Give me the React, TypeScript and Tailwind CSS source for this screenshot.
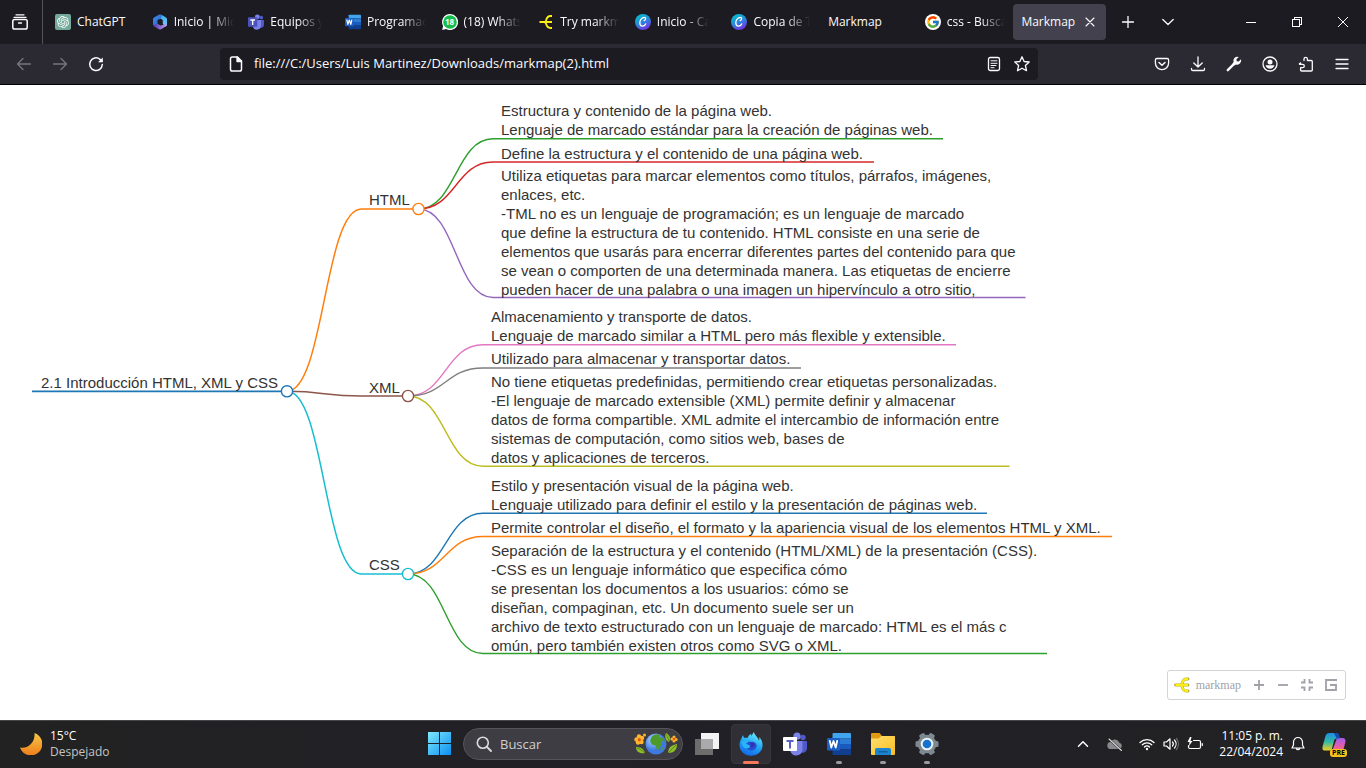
import React from "react";
import { SiOpenai } from "react-icons/si";
import { FcGoogle } from "react-icons/fc";

type P = { children?: React.ReactNode; className?: string; box?: string };

function Svg({ children, className = "size-4", box = "0 0 16 16" }: P) {
  return (
    <svg viewBox={box} className={`shrink-0 ${className}`} fill="none" stroke="currentColor" strokeWidth="1.3" strokeLinecap="round" strokeLinejoin="round" aria-hidden="true">
      {children}
    </svg>
  );
}

/* ---------- favicons ---------- */

const ChatGptIcon = () => (
  <span className="flex size-4 shrink-0 items-center justify-center rounded-xs bg-[#74aa9c] text-white">
    <SiOpenai className="size-3" />
  </span>
);

const M365Icon = () => (
  <Svg>
    <defs>
      <linearGradient id="m1" x1="0" y1="0" x2="1" y2="1"><stop offset="0" stopColor="#3d8fe8" /><stop offset="1" stopColor="#2a5fd0" /></linearGradient>
      <linearGradient id="m2" x1="0" y1="0" x2="0" y2="1"><stop offset="0" stopColor="#3bb4f2" /><stop offset="1" stopColor="#7cc4f8" /></linearGradient>
      <linearGradient id="m3" x1="0" y1="0" x2="1" y2="0"><stop offset="0" stopColor="#4a3ba8" /><stop offset="1" stopColor="#c79af5" /></linearGradient>
    </defs>
    <path stroke="none" fill="url(#m2)" d="M9.500.8 14 3.400c.6.4 1 1 1 1.700v5.400c0 1-.7 1.700-1.500 2.200L10.800 10V6L7.500 4z" />
    <path stroke="none" fill="url(#m1)" d="M7 .7c.7-.4 1.500-.3 2.200 0L10 1.300 9 4.500 5.500 6v4L3.200 12.300C2 12 1 11.500 1 10.300V5.200c0-.7.4-1.300 1-1.700z" />
    <path stroke="none" fill="url(#m3)" d="M1.300 11 5.500 9.800 8.500 11.500l6.300-1.500c0 1.200-.4 1.900-1 2.300L9.200 15.200c-.8.4-1.600.4-2.300 0L2.200 12.500c-.5-.3-.9-.8-.9-1.500z" />
  </Svg>
);

function TeamsIcon({ className = "size-4", light = false }: { className?: string; light?: boolean }) {
  return (
    <Svg className={className} box="0 0 24 24">
      <g stroke="none">
        <circle cx="20" cy="5.500" r="2.700" fill="#5059c9" />
        <circle cx="14" cy="4.200" r="3.600" fill="#7b83eb" />
        <path fill="#5059c9" d="M17 9h6.200c.5 0 .8.3.8.8v6.700a4.500 4.500 0 0 1-7 3.500z" />
        <path fill="#7b83eb" d="M8.500 9h10.200c.5 0 .8.4.8.8v7.200a6.300 6.300 0 0 1-12 2.800z" />
        <rect x="0" y="5" width="14" height="14" rx="1" fill={light ? "#fff" : "#4b53bc"} />
        <path fill={light ? "#5b5fc7" : "#fff"} d="M3.500 8h7v2H8v6.500H6V10H3.500z" />
      </g>
    </Svg>
  );
}

function WordIcon({ className = "size-4" }: { className?: string }) {
  return (
    <Svg className={className} box="0 0 24 24">
      <g stroke="none">
        <path fill="#41a5ee" d="M6.500 1H23a1 1 0 0 1 1 1v4.500H5.500V2a1 1 0 0 1 1-1z" />
        <path fill="#2b7cd3" d="M5.500 6.500H24V12H5.500z" />
        <path fill="#185abd" d="M5.500 12H24v5.500H5.500z" />
        <path fill="#103f91" d="M5.500 17.500H24V22a1 1 0 0 1-1 1H6.500a1 1 0 0 1-1-1z" />
        <rect x="0" y="6" width="13" height="12.500" rx="1" fill="#1c5fc4" />
      </g>
      <path stroke="#fff" strokeWidth="1.800" d="m2.800 9 1.500 6.500L6.500 9l2.200 6.500L10.200 9" />
    </Svg>
  );
}

const WhatsAppIcon = () => (
  <span className="relative flex size-4 shrink-0 items-center justify-center text-[8px] font-bold text-white">
    <svg viewBox="0 0 16 16" className="absolute inset-0" aria-hidden="true">
      <path fill="#fff" d="M8 0a8 8 0 1 1-3.800 15L.2 16l.9-4A8 8 0 0 1 8 0z" />
      <circle cx="8" cy="8" r="6.800" fill="#12bf4c" />
    </svg>
    <span className="relative">18</span>
  </span>
);

function MarkmapIcon({ className = "size-4", outline = false }: { className?: string; outline?: boolean }) {
  const d = "M1.500 8h12.500M14 2h-1.500C9.500 2 8.500 4.500 8 6.500 7.600 7.600 7 8 6 8c1 0 1.600.4 2 1.500.5 2 1.500 4.500 4.500 4.500H14";
  return (
    <Svg className={className}>
      {outline && <path stroke="#b5ab2a" strokeWidth="2.800" d={d} />}
      <path stroke="#fdee14" strokeWidth="1.800" strokeLinecap="butt" d={d} />
    </Svg>
  );
}

const CanvaIcon = () => (
  <Svg>
    <defs>
      <linearGradient id="cv" x1=".2" y1="0" x2=".7" y2="1"><stop offset="0" stopColor="#00c4cc" /><stop offset=".5" stopColor="#2a88dd" /><stop offset="1" stopColor="#7d2ae8" /></linearGradient>
    </defs>
    <circle cx="8" cy="8" r="8" fill="url(#cv)" stroke="none" />
    <path stroke="#fff" strokeWidth="1.300" d="M9.300 6.500c1.500-.3 1.900-3.200 0-3.200-2.500 0-4.500 2.900-4.500 5.500 0 2 1.100 3.300 2.600 3.300 1.500 0 2.800-1 3.300-2.200" />
  </Svg>
);

const GoogleIcon = () => (
  <span className="flex size-4 shrink-0 items-center justify-center rounded-full bg-white"><FcGoogle className="size-[14px]" /></span>
);

/* ---------- browser ---------- */

const tabs: { title: string; icon?: React.ReactNode; fade?: boolean }[] = [
  { title: "ChatGPT", icon: <ChatGptIcon /> },
  { title: "Inicio | Mic", icon: <M365Icon />, fade: true },
  { title: "Equipos y", icon: <TeamsIcon />, fade: true },
  { title: "Programac", icon: <WordIcon />, fade: true },
  { title: "(18) Whats", icon: <WhatsAppIcon />, fade: true },
  { title: "Try markm", icon: <MarkmapIcon />, fade: true },
  { title: "Inicio - Ca", icon: <CanvaIcon />, fade: true },
  { title: "Copia de T", icon: <CanvaIcon />, fade: true },
  { title: "Markmap" },
  { title: "css - Busca", icon: <GoogleIcon />, fade: true },
];

function TabBar() {
  return (
    <header className="flex h-11 items-stretch bg-[#1c1b22] text-[12px] text-[#fbfbfe]">
      <button aria-label="Ver pestañas" className="flex w-[43px] shrink-0 items-center justify-center border-r border-[#54535c] pr-0.5">
        <Svg className="size-4">
          <path d="M2 3.300h12M4 .8h8" />
          <rect x=".8" y="5.500" width="14.400" height="9.500" rx="1.800" strokeWidth="1.500" />
          <path d="M6.500 9h3" />
        </Svg>
      </button>
      <div className="flex min-w-0 flex-1 items-center pl-0.5">
        {tabs.map((t, i) => (
          <div key={i} className="min-w-0 flex-1 px-0.5">
            <button className="flex h-9 w-full items-center gap-1.5 pl-2 text-left">
              {t.icon}
              <span className={t.fade ? "whitespace-nowrap [mask-image:linear-gradient(to_left,transparent_2px,black_26px)]" : "whitespace-nowrap"}>{t.title}</span>
            </button>
          </div>
        ))}
        <div className="min-w-0 flex-1 px-0.5">
          <div className="flex h-9 items-center justify-between rounded bg-[#42414d] pr-2 pl-2">
            <span>Markmap</span>
            <button aria-label="Cerrar pestaña" className="flex size-4 items-center justify-center">
              <Svg className="size-2.5" box="0 0 10 10"><path d="m1 1 8 8M9 1 1 9" strokeWidth="1.100" /></Svg>
            </button>
          </div>
        </div>
      </div>
      <button aria-label="Nueva pestaña" className="flex w-10 items-center justify-center">
        <Svg className="size-3" box="0 0 12 12"><path d="M6 .5v11M.5 6h11" /></Svg>
      </button>
      <button aria-label="Listar pestañas" className="mr-10 flex w-10 items-center justify-center">
        <Svg className="size-3" box="0 0 12 12"><path d="m.8 3.500 5.200 5 5.200-5" /></Svg>
      </button>
      <button aria-label="Minimizar" className="flex w-[46px] items-center justify-center"><span className="h-px w-2.5 bg-white" /></button>
      <button aria-label="Restaurar" className="flex w-[46px] items-center justify-center">
        <svg viewBox="0 0 10 10" className="size-2.5" fill="none" stroke="#fff" shapeRendering="crispEdges" aria-hidden="true"><path d="M.5 2.500h7v7h-7zM2.500 2.500v-2h7v7h-2" /></svg>
      </button>
      <button aria-label="Cerrar" className="flex w-[46px] items-center justify-center">
        <Svg className="size-2.5" box="0 0 10 10"><path d="m0 0 10 10M10 0 0 10" strokeWidth="1" /></Svg>
      </button>
    </header>
  );
}

function NavButton({ label, children, dim }: { label: string; children: React.ReactNode; dim?: boolean }) {
  return (
    <button aria-label={label} className={dim ? "flex h-8 w-9 items-center justify-center text-[#77767e]" : "flex h-8 w-9 items-center justify-center text-[#fbfbfe]"}>
      <Svg>{children}</Svg>
    </button>
  );
}

function NavBar() {
  return (
    <nav className="flex h-[41px] items-center border-b border-black bg-[#2b2a33] px-1.5 text-[#fbfbfe]">
      <NavButton label="Atrás" dim><path d="M14.500 8H1.500M7 2.500 1.500 8 7 13.500" /></NavButton>
      <NavButton label="Adelante" dim><path d="M1.500 8h13M9 2.500 14.500 8 9 13.500" /></NavButton>
      <NavButton label="Recargar">
        <path d="M14.300 8.500A6.300 6.300 0 1 1 12 3.300L14 5" strokeWidth="1.500" />
        <path d="M14.800 1.500v4.800H10z" fill="currentColor" stroke="none" />
      </NavButton>
      <div className="mx-[106px] flex h-8 min-w-0 flex-1 items-center rounded bg-[#1c1b22] pr-2 pl-2">
        <Svg>
          <path d="M9.500 1H4.300C3.300 1 2.500 1.800 2.500 2.800v10.400c0 1 .8 1.800 1.800 1.800h7.400c1 0 1.800-.8 1.800-1.800V5z" strokeWidth="1.500" />
          <path d="M9 1v4.500h4.500z" fill="currentColor" />
        </Svg>
        <input aria-label="Dirección" defaultValue="file:///C:/Users/Luis Martinez/Downloads/markmap(2).html" className="ml-2.5 min-w-0 flex-1 bg-transparent text-[13px] outline-none" />
        <button aria-label="Vista de lectura" className="mr-3">
          <Svg><rect x="2.500" y="1.500" width="11" height="13" rx="1.800" /><path d="M5 4.800h6M5 7.300h6M5 9.500h5M5 11.700h3" strokeWidth="1" /></Svg>
        </button>
        <button aria-label="Añadir a marcadores">
          <Svg><path d="m8 .8 2.100 4.700 5.100.5-3.800 3.500 1.100 5.200L8 12.200l-4.500 2.500 1.100-5.200L.8 6l5.100-.5z" /></Svg>
        </button>
      </div>
      <NavButton label="Pocket"><path d="M2.800 2.500h10.400c.8 0 1.400.6 1.400 1.400V7a6.600 6.600 0 0 1-13.200 0V3.900c0-.8.600-1.400 1.400-1.400z" /><path d="M5 6.500 8 9.300l3-2.800" strokeWidth="1.500" /></NavButton>
      <NavButton label="Descargas"><path d="M8 1v10M3.800 7 8 11l4.200-4M1.500 12.500v.7c0 .8.500 1.300 1.300 1.300h10.400c.8 0 1.300-.500 1.300-1.300v-.7" /></NavButton>
      <NavButton label="Herramientas">
        <path d="m1.800 14.200 6.500-6.500" strokeWidth="2.400" />
        <path stroke="none" fill="currentColor" d="M12.800 1a4 4 0 0 0-5.200 5L6.500 7.500l2 2L10 8.400a4 4 0 0 0 5-5.200l-2.300 2.300-2-.3-.3-2z" />
      </NavButton>
      <NavButton label="Cuenta">
        <circle cx="8" cy="8" r="7" /><circle cx="8" cy="6" r="2.500" fill="currentColor" stroke="none" />
        <path d="M3.500 9.300h9a4.700 4.700 0 0 1-9 0z" fill="currentColor" stroke="none" />
      </NavButton>
      <NavButton label="Extensiones"><path d="M6 4.500V3a1.700 1.700 0 0 1 3.400 0v1.500h3.800c.7 0 1.100.4 1.100 1.100V14c0 .6-.4 1-1.100 1H3.700c-.7 0-1.100-.4-1.100-1v-2.300h2a1.700 1.700 0 0 0 0-3.400H1.500v-1M2.600 8.300V7" /></NavButton>
      <NavButton label="Menú"><path d="M2 3.500h12M2 8h12M2 12.500h12" /></NavButton>
    </nav>
  );
}

/* ---------- mind map ---------- */

const nodes: { at: string; lines: string[] }[] = [
  { at: "left-[41px] top-[288px]", lines: ["2.1 Introducción HTML, XML y CSS"] },
  { at: "left-[369px] top-[105px]", lines: ["HTML"] },
  { at: "left-[369px] top-[293px]", lines: ["XML"] },
  { at: "left-[369px] top-[470px]", lines: ["CSS"] },
  { at: "left-[501px] top-[16px]", lines: ["Estructura y contenido de la página web.", "Lenguaje de marcado estándar para la creación de páginas web."] },
  { at: "left-[501px] top-[59px]", lines: ["Define la estructura y el contenido de una página web."] },
  {
    at: "left-[501px] top-[81px]",
    lines: [
      "Utiliza etiquetas para marcar elementos como títulos, párrafos, imágenes,",
      "enlaces, etc.",
      "-TML no es un lenguaje de programación; es un lenguaje de marcado",
      "que define la estructura de tu contenido. HTML consiste en una serie de",
      "elementos que usarás para encerrar diferentes partes del contenido para que",
      "se vean o comporten de una determinada manera. Las etiquetas de encierre",
      "pueden hacer de una palabra o una imagen un hipervínculo a otro sitio,",
    ],
  },
  { at: "left-[491px] top-[222px]", lines: ["Almacenamiento y transporte de datos.", "Lenguaje de marcado similar a HTML pero más flexible y extensible."] },
  { at: "left-[491px] top-[264px]", lines: ["Utilizado para almacenar y transportar datos."] },
  {
    at: "left-[491px] top-[287px]",
    lines: [
      "No tiene etiquetas predefinidas, permitiendo crear etiquetas personalizadas.",
      "-El lenguaje de marcado extensible (XML) permite definir y almacenar",
      "datos de forma compartible. XML admite el intercambio de información entre",
      "sistemas de computación, como sitios web, bases de",
      "datos y aplicaciones de terceros.",
    ],
  },
  { at: "left-[491px] top-[391px]", lines: ["Estilo y presentación visual de la página web.", "Lenguaje utilizado para definir el estilo y la presentación de páginas web."] },
  { at: "left-[491px] top-[433px]", lines: ["Permite controlar el diseño, el formato y la apariencia visual de los elementos HTML y XML."] },
  {
    at: "left-[491px] top-[456px]",
    lines: [
      "Separación de la estructura y el contenido (HTML/XML) de la presentación (CSS).",
      "-CSS es un lenguaje informático que especifica cómo",
      "se presentan los documentos a los usuarios: cómo se",
      "diseñan, compaginan, etc. Un documento suele ser un",
      "archivo de texto estructurado con un lenguaje de marcado: HTML es el más c",
      "omún, pero también existen otros como SVG o XML.",
    ],
  },
];

// from x, from y, bend end x, line y, line end x, colour, width
const links: [number, number, number, number, number, string, number][] = [
  [418.5, 124, 493, 53.7, 943, "#2ca02c", 1.4],
  [418.5, 124, 493, 77, 874, "#d62728", 1.4],
  [418.5, 124, 493, 212.5, 1025.500, "#9467bd", 1.4],
  [408, 311, 483, 259.700, 956, "#e377c2", 1.4],
  [408, 311, 483, 283, 801, "#7f7f7f", 1.4],
  [408, 311, 483, 381.200, 1009.500, "#bcbd22", 1.4],
  [408, 489, 483, 428.300, 987, "#1f77b4", 1.4],
  [408, 489, 483, 451.500, 1112, "#ff7f0e", 1.4],
  [408, 489, 483, 568.500, 1047, "#2ca02c", 1.4],
  [287, 306.300, 361.500, 124, 418, "#ff7f0e", 1.5],
  [287, 306.300, 361.500, 311, 408, "#8c564b", 1.5],
  [287, 306.300, 361.500, 489, 408, "#17becf", 1.5],
];

const dots: [number, number, string][] = [
  [287, 306.300, "#1f77b4"],
  [418.500, 124, "#ff7f0e"],
  [408, 311, "#8c564b"],
  [408, 489, "#17becf"],
];

function MindMap() {
  return (
    <main className="relative min-h-[600px] flex-1 overflow-hidden bg-white font-['Liberation_Sans',sans-serif] text-[15px] leading-[19px] text-[#333]">
      <svg className="absolute inset-0 size-full" fill="none" aria-hidden="true">
        <path d="M32 306.300H287" stroke="#1f77b4" strokeWidth="1.800" />
        {links.map(([x0, y0, x1, y1, x2, c, w], i) => {
          const m = (x0 + x1) / 2;
          return <path key={i} d={`M${x0} ${y0}C${m} ${y0} ${m} ${y1} ${x1} ${y1}H${x2}`} stroke={c} strokeWidth={w} />;
        })}
        {dots.map(([x, y, c], i) => <circle key={i} cx={x} cy={y} r="5.600" fill="#fff" stroke={c} strokeWidth="1.400" />)}
      </svg>
      {nodes.map((n, i) => (
        <div key={i} className={`absolute whitespace-nowrap ${n.at}`}>
          {n.lines.map((l, j) => <div key={j}>{l}</div>)}
        </div>
      ))}
      <div className="absolute right-5 bottom-5 flex h-[30px] items-center rounded-[3px] border border-[#d4d4d8] bg-white pr-1.5 pl-1 text-[#a1a1aa]">
        <a href="#markmap" className="flex items-center gap-1 font-['Liberation_Serif',serif] text-[12px] leading-4">
          <MarkmapIcon className="h-4 w-5" outline />
          markmap
        </a>
        <button aria-label="Acercar" className="ml-2.5 flex size-4 items-center justify-center"><Svg className="size-3" box="0 0 12 12"><path d="M6 1v10M1 6h10" strokeWidth="1.800" strokeLinecap="butt" /></Svg></button>
        <button aria-label="Alejar" className="ml-2 flex size-4 items-center justify-center"><Svg className="size-3" box="0 0 12 12"><path d="M1 6h10" strokeWidth="1.800" strokeLinecap="butt" /></Svg></button>
        <button aria-label="Ajustar" className="ml-2 flex size-4 items-center justify-center"><Svg className="size-3" box="0 0 12 12"><path d="M0 3.500h3.500V0M8.500 0v3.500H12M12 8.500H8.500V12M3.500 12V8.500H0" strokeWidth="1.800" strokeLinecap="butt" strokeLinejoin="miter" /></Svg></button>
        <button aria-label="Expandir nodos" className="ml-2 flex size-4 items-center justify-center"><Svg className="size-3" box="0 0 12 12"><path d="M12 1H1v10h10V6H5" strokeWidth="1.800" strokeLinecap="butt" strokeLinejoin="miter" /></Svg></button>
      </div>
    </main>
  );
}

/* ---------- taskbar ---------- */

function TaskButton({ label, children, active, running }: { label: string; children: React.ReactNode; active?: boolean; running?: boolean }) {
  return (
    <button aria-label={label} className={active ? "relative flex size-10 items-center justify-center rounded border border-[#37363d] bg-[#302f36]" : "relative flex size-10 items-center justify-center"}>
      {children}
      {active && <span className="absolute -bottom-px left-[11px] h-[3px] w-4 rounded-full bg-[#f5775c]" />}
      {running && <span className="absolute bottom-0 left-[17px] h-[3px] w-1.5 rounded-full bg-[#9a999e]" />}
    </button>
  );
}

const EarthArt = () => (
  <svg viewBox="0 0 44 22" className="h-[22px] w-11" aria-hidden="true">
    <defs>
      <radialGradient id="ea" cx=".35" cy=".3"><stop offset="0" stopColor="#a9d6fc" /><stop offset="1" stopColor="#3f78e0" /></radialGradient>
    </defs>
    <path fill="#8dbb2a" d="M2 14c5 0 8 2 9 6-5 1-9-1-9-6zM32 0c4 2 5 5 3 9-3-1-5-5-3-9zM43 11c0 6-3 9-9 9 0-5 3-8 9-9z" />
    <path stroke="#4d7a16" strokeWidth=".7" fill="none" d="M3 15c3 1 6 3 8 5M34 20l8-8M32.500 1.500 35 8" />
    <circle cx="22" cy="11" r="10.500" fill="url(#ea)" />
    <path fill="#4d9a2a" d="M18 3.500c2-2 6-2.500 8-1.500l-1 2 4 1 2 4-3-1-.5 3.500-3 5-1.500 1-1.200-5-4-1-1.500-3c0-2 .7-4 1.700-5zM28 14l1.500 1-2 3-1-1z" />
    <g fill="#ffb52e"><circle cx="5" cy="3.500" r="2.200" /><circle cx="2.500" cy="6.500" r="2.200" /><circle cx="4" cy="9.500" r="2.200" /><circle cx="7.500" cy="9" r="2.200" /><circle cx="8" cy="5" r="2.200" /><circle cx="10.500" cy="2" r="1.500" /><circle cx="40" cy="4" r="1.600" /><circle cx="38" cy="6" r="1.600" /><circle cx="42" cy="6.500" r="1.600" /><circle cx="40" cy="8" r="1.600" /></g>
    <circle cx="5.300" cy="6.800" r="1.600" fill="#e8590c" /><circle cx="40" cy="6" r="1.200" fill="#e8590c" />
  </svg>
);

function Taskbar() {
  return (
    <footer className="grid h-12 grid-cols-[1fr_auto_1fr] items-center border-t border-[#46464a] bg-linear-to-r from-[#222222] via-[#212027] to-[#222223] pb-0.5 text-[12px] leading-4 text-white">
      <button className="flex items-center gap-2 pl-5 text-left">
        <svg viewBox="0 0 22 22" className="size-[22px]" aria-hidden="true">
          <defs><linearGradient id="mo" x1="0" y1="0" x2="0" y2="1"><stop offset="0" stopColor="#f6c945" /><stop offset="1" stopColor="#f07d1c" /></linearGradient></defs>
          <path fill="url(#mo)" d="M14.500 0A11.500 11.500 0 1 1 0 14.500C8 16.500 15.500 9 14.500 0z" />
        </svg>
        <span><span className="block">15°C</span><span className="block text-[#c4c4c6]">Despejado</span></span>
      </button>
      <div className="flex items-center gap-1">
        <TaskButton label="Inicio">
          <svg viewBox="0 0 23 23" className="size-[23px]" aria-hidden="true">
            <defs><linearGradient id="wi" x1="0" y1="0" x2="23" y2="23" gradientUnits="userSpaceOnUse"><stop offset="0" stopColor="#7fe9ff" /><stop offset="1" stopColor="#0a8ff0" /></linearGradient></defs>
            <path fill="url(#wi)" d="M0 0h11v11H0zM12 0h11v11H12zM0 12h11v11H0zM12 12h11v11H12z" />
          </svg>
        </TaskButton>
        <label className="flex h-8 w-[220px] items-center rounded-full border border-[#55545a] bg-[#3e3d43] pr-1 pl-3">
          <Svg className="size-4"><circle cx="6.800" cy="6.800" r="5.500" strokeWidth="1.600" stroke="#ddd" /><path d="m11 11 4 4" strokeWidth="1.800" stroke="#ddd" /></Svg>
          <input aria-label="Buscar" placeholder="Buscar" className="ml-2 min-w-0 flex-1 bg-transparent text-[13px] outline-none placeholder:text-[#cfcfd2]" />
          <EarthArt />
        </label>
        <TaskButton label="Vista de tareas">
          <svg viewBox="0 0 24 22" className="h-[22px] w-6" aria-hidden="true"><path fill="#f3f3f3" d="M6 0h18v16H6z" /><path fill="#6d6d6e" d="M0 6h18v16H0z" /><path fill="#aaa9ab" d="M6 6h12v10H6z" /></svg>
        </TaskButton>
        <TaskButton label="Firefox" active>
          <svg viewBox="0 0 24 24" className="size-6" aria-hidden="true">
            <defs>
              <linearGradient id="ff" x1=".7" y1="0" x2=".3" y2="1"><stop offset="0" stopColor="#6ff0f7" /><stop offset=".5" stopColor="#1fa7f5" /><stop offset="1" stopColor="#1463e8" /></linearGradient>
            </defs>
            <path fill="url(#ff)" d="M4 3c.2 1.400.8 2.200 1.700 3 1-.3 2-.3 2.800 0C9.500 4 10.700 2.500 12.300 1.800l-.1 2.400L14.800 0c.6 3 4 4.800 5.200 8.700.4-.8.400-2.400.2-3.700 2.400 2.500 3.600 5.500 3.300 9A11.500 10.300 0 0 1 .5 13C.5 9 2.300 7 4 3z" />
            <path fill="#2450d4" d="M6.500 13c0-2 2.500-2.500 3-3.500 1.500.8 3 0 4.500.3 3 .6 4 3 3.500 5-.6 2.600-3 4-5.800 3.700C8.500 18.200 6.500 16 6.500 13z" />
            <path fill="#2cb4f7" d="M2.500 10.500C4 8 7 8 9.500 9.500c-.5 1-2 1-2.500 2 1 1.500 3.500 1 4.500 3-2 3-6.500 2.500-8-1z" />
            <path fill="#3a2fa8" d="M11 11c3-1.500 5 .5 4.500 2.500S12 16 10.500 14.500c2-.5 2.500-1.500.5-3.500z" />
          </svg>
        </TaskButton>
        <TaskButton label="Teams"><TeamsIcon className="size-6" light /></TaskButton>
        <TaskButton label="Word" running><WordIcon className="size-6" /></TaskButton>
        <TaskButton label="Explorador de archivos" running>
          <svg viewBox="0 0 24 22" className="h-[22px] w-6" aria-hidden="true">
            <defs><linearGradient id="fo" x1="0" y1="0" x2="1" y2="1"><stop offset="0" stopColor="#ffdf6e" /><stop offset="1" stopColor="#f9bd23" /></linearGradient></defs>
            <path fill="#e09b10" d="M1 0h7.500L11 3H23a1 1 0 0 1 1 1v6H0V1a1 1 0 0 1 1-1z" />
            <path fill="url(#fo)" d="M0 5.500h7.500L10.500 3H23a1 1 0 0 1 1 1v17a1 1 0 0 1-1 1H1a1 1 0 0 1-1-1z" />
            <path fill="#1b86cf" d="M4 22v-5c0-1.200.8-2 2-2h12c1.200 0 2 .8 2 2v5z" /><path fill="#0f5fa3" d="M7.500 18h9v1.500h-9z" />
          </svg>
        </TaskButton>
        <TaskButton label="Configuración" running>
          <svg viewBox="0 0 24 24" className="size-6" aria-hidden="true">
            <g fill="#7d8991">
              <circle cx="12" cy="12" r="9.300" />
              <rect x="9" y=".5" width="6" height="23" rx="1.500" transform="rotate(30 12 12)" />
              <rect x="9" y=".5" width="6" height="23" rx="1.500" transform="rotate(90 12 12)" />
              <rect x="9" y=".5" width="6" height="23" rx="1.500" transform="rotate(150 12 12)" />
            </g>
            <circle cx="12" cy="12" r="6.300" fill="#eef2f5" /><circle cx="12" cy="12" r="4.300" fill="#1573cf" />
          </svg>
        </TaskButton>
      </div>
      <div className="flex items-center justify-end pr-5">
        <button aria-label="Iconos ocultos" className="flex w-8 justify-center"><Svg className="size-3" box="0 0 12 12"><path d="m1.500 8.300 4.500-4.500 4.500 4.500" strokeWidth="1.500" /></Svg></button>
        <button aria-label="OneDrive" className="flex w-8 justify-center">
          <Svg><path stroke="none" fill="#8a8a8c" d="M4 13a3.500 3.500 0 0 1-.3-7 4.700 4.700 0 0 1 8.600.8A3.200 3.200 0 0 1 12.500 13z" /><path d="m2.500 3.500 12 11" stroke="#222" strokeWidth="2.200" /><path d="m2 3 12.500 11.500" stroke="#ddd" strokeWidth="1.100" /></Svg>
        </button>
        <button aria-label="Red, volumen y batería" className="ml-2 flex items-center gap-2">
          <Svg><path d="M1 6.500a10 10 0 0 1 14 0M3.300 8.800a6.700 6.700 0 0 1 9.400 0M5.500 11a3.500 3.500 0 0 1 5 0" /><circle cx="8" cy="13" r="1.200" fill="currentColor" stroke="none" /></Svg>
          <Svg><path d="M1 6h2.500L7 2.800v10.400L3.500 10H1zM9.500 6a3 3 0 0 1 0 4M11.500 4a6 6 0 0 1 0 8" strokeWidth="1.200" /><path d="M13.500 2.500a9 9 0 0 1 0 11" stroke="#666" /></Svg>
          <Svg className="size-4"><path d="M6.500 4.500H12c.8 0 1.500.7 1.500 1.500v5c0 .8-.7 1.500-1.500 1.500H3c-.8 0-1.500-.7-1.500-1.500V9.500M15.300 7.500v2" strokeWidth="1.200" /><path fill="currentColor" stroke="none" d="M3 1 .5 6h2L2 10l3.500-5h-2l1-4z" /></Svg>
        </button>
        <button className="ml-4 text-right whitespace-nowrap"><span className="block">11:05 p. m.</span><span className="block">22/04/2024</span></button>
        <button aria-label="Notificaciones" className="ml-[7px]"><Svg><path d="M8 1.500A4.500 4.500 0 0 0 3.500 6v3L2 12h12l-1.500-3V6A4.500 4.500 0 0 0 8 1.500zM6.300 12.500a1.800 1.800 0 0 0 3.400 0" strokeWidth="1.200" /></Svg></button>
        <button aria-label="Copilot" className="relative ml-4 size-6">
          <svg viewBox="0 0 24 24" className="size-6" aria-hidden="true">
            <defs>
              <linearGradient id="c1" x1="0" y1="0" x2="0" y2="1"><stop offset="0" stopColor="#1c8fe6" /><stop offset=".5" stopColor="#33b8a6" /><stop offset="1" stopColor="#f2d022" /></linearGradient>
              <linearGradient id="c2" x1="0" y1="0" x2="0" y2="1"><stop offset="0" stopColor="#a25df0" /><stop offset=".6" stopColor="#ee5f9c" /><stop offset="1" stopColor="#f89a3c" /></linearGradient>
            </defs>
            <path fill="url(#c2)" d="M15 6h5.500c2.500 0 3.500 2 2.800 4.500l-2 7.500C20.500 21 19 22 17 22H9z" />
            <path fill="url(#c1)" d="M7.500 1H14c2 0 2.500 1 3 3l.7 2.500h-3c-1.500 0-2.200.8-2.700 2.500l-2 7.500c-.5 1.500-1 2-2.500 2h-5C.5 18.500 0 16.500.7 14L3.500 4c.6-2 2-3 4-3z" />
            <path fill="#1747b8" d="M12 1h2c2 0 2.500 1 3 3l.7 2.500h-3z" />
          </svg>
          <span className="absolute -right-px -bottom-px rounded-[3px] bg-[#fbc21c] px-0.5 text-[7px] leading-[8px] font-bold text-black">PRE</span>
        </button>
      </div>
    </footer>
  );
}

export default function App() {
  return (
    <div className="flex min-h-screen flex-col font-['Open_Sans','Noto_Sans',sans-serif]">
      <TabBar />
      <NavBar />
      <MindMap />
      <Taskbar />
    </div>
  );
}
